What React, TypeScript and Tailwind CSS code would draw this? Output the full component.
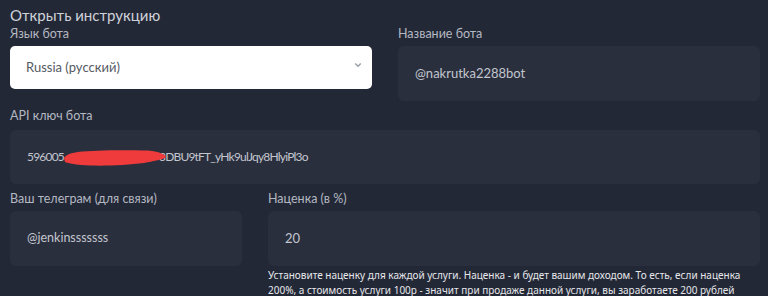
import React from "react";

const font = { fontFamily: "Lato, 'Noto Sans', sans-serif" };

function Field({ children, className = "" }: { children: React.ReactNode; className?: string }) {
  return (
    <div className={"relative flex items-center rounded-md bg-[#2a2f3e] pl-[17px] text-[#c3c6ce] " + className}>
      {children}
    </div>
  );
}

function Label({ children }: { children: React.ReactNode }) {
  return <p className="h-[21px] text-[12.5px] leading-[17px] text-[#b4b8c1]">{children}</p>;
}

export default function App() {
  return (
    <div className="h-[296px] w-[768px] overflow-hidden bg-[#232837] pl-[10px] pr-[8px] pt-[5px]" style={font}>
      <p className="h-[20px] text-[15px] leading-[20px] text-[#cfd2d9]">Открыть инструкцию</p>

      {/* Row 1 — language + bot name */}
      <div className="grid grid-cols-2 gap-x-[26px]">
        <div>
          <Label>Язык бота</Label>
          <div className="flex h-[43px] items-center justify-between rounded-[5px] bg-white pl-[16px] pr-[10px] text-[13px] text-[#555a63]">
            <span>Russia (русский)</span>
            <svg width="8" height="6" viewBox="0 0 8 6" className="mb-[6px]">
              <path d="M1.2 1.5 L4 4.3 L6.8 1.5" fill="none" stroke="#9a9ea6" strokeWidth="1.4" />
            </svg>
          </div>
        </div>
        <div>
          <Label>Название бота</Label>
          <Field className="h-[55px] text-[13px]">@nakrutka2288bot</Field>
        </div>
      </div>

      {/* Row 2 — API key, middle part scribbled out */}
      <div className="mt-[6px]">
        <Label>API ключ бота</Label>
        <Field className="mt-[2px] h-[54px] text-[12px] tracking-[-0.8px]">
          <span>596005</span>
          <svg width="102" height="16" viewBox="0 0 102 16" className="relative z-10 mt-[2px] -mr-[7px] shrink-0">
            <path
              d="M0 8 C2 5 6 3 14 2 C30 0 60 0 84 0.5 C92 1 98 3 102 6 L101 8 C96 10 90 11 80 13 C64 15 44 16 26 15.5 C14 15 6 14 1 12 Z"
              fill="#ef3b3b"
            />
          </svg>
          <span>3DBU9tFT_yHk9ulJqy8HlyiPl3o</span>
        </Field>
      </div>

      {/* Row 3 — telegram + markup */}
      <div className="mt-[6px] grid grid-cols-[232px_1fr] gap-x-[26px]">
        <div>
          <Label>Ваш телеграм (для связи)</Label>
          <Field className="h-[55px] text-[12.5px]">@jenkinsssssss</Field>
        </div>
        <div>
          <Label>Наценка (в %)</Label>
          <Field className="h-[55px] text-[13px]">20</Field>
          <p className="mt-[2px] text-[10px] leading-[15px] text-[#e6e7ea]" style={{ fontFamily: "'Noto Sans', sans-serif" }}>
            Установите наценку для каждой услуги. Наценка - и будет вашим доходом. То есть, если наценка 200%, а стоимость услуги 100р - значит при продаже данной услуги, вы заработаете 200 рублей
          </p>
        </div>
      </div>
    </div>
  );
}
